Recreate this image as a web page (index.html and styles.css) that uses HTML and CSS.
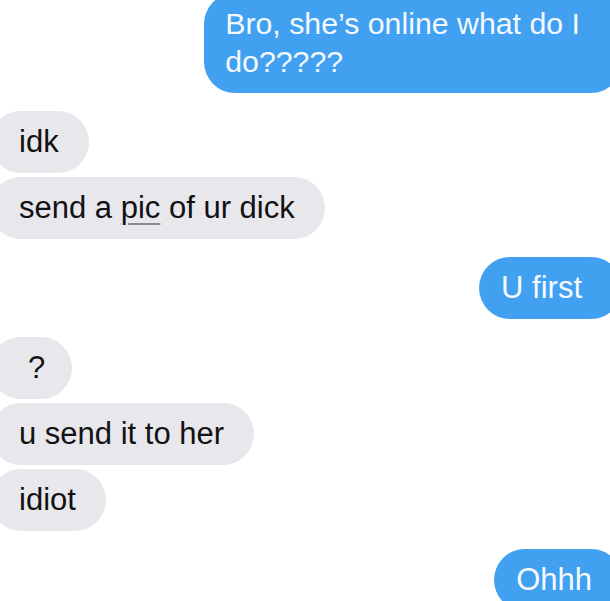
FILE: index.html
```html
<!DOCTYPE html>
<html>
<head>
<meta charset="utf-8">
<link rel="stylesheet" href="styles.css">
</head>
<body>
<div class="chat">
  <div class="msg out first-msg">Bro, she’s online what do I<br>do?????</div>
  <div class="msg in gap-lg">idk</div>
  <div class="msg in gap-sm">send a <span class="link">pic</span> of ur dick</div>
  <div class="msg out gap-lg">U first</div>
  <div class="msg in gap-lg q">?</div>
  <div class="msg in gap-sm">u send it to her</div>
  <div class="msg in gap-sm">idiot</div>
  <div class="msg out gap-md tight">Ohhh</div>
</div>
</body>
</html>
```

FILE: styles.css
```css
html, body {
  margin: 0;
  padding: 0;
  background: #ffffff;
}

body {
  width: 610px;
  height: 601px;
  overflow: hidden;
  font-family: "Liberation Sans", Arial, sans-serif;
}

.chat {
  display: flex;
  flex-direction: column;
  width: 610px;
}

.msg {
  font-size: 31px;
  line-height: 38px;
  padding: 12px 0;
  border-radius: 31px;
  white-space: nowrap;
}

.in {
  align-self: flex-start;
  background: #e7e7ec;
  color: #121212;
  margin-left: -10px;
  padding-left: 29px;
  padding-right: 30px;
}

.in.q {
  padding-left: 38px;
  padding-right: 27px;
}

.out {
  align-self: flex-end;
  background: #41a0f0;
  color: #f4f9ff;
  margin-right: -12px;
  padding-left: 22px;
  padding-right: 40px;
}

.out.tight {
  padding-right: 30px;
}

.first-msg {
  margin-top: -7px;
  font-size: 30.3px;
  padding-left: 21px;
  padding-right: 42px;
}

.gap-sm { margin-top: 4px; }
.gap-md { margin-top: 18px; }
.gap-lg { margin-top: 18px; }

.link {
  text-decoration: underline;
  text-decoration-color: #8a8a8a;
  text-decoration-thickness: 2px;
  text-underline-offset: 5px;
}
```
